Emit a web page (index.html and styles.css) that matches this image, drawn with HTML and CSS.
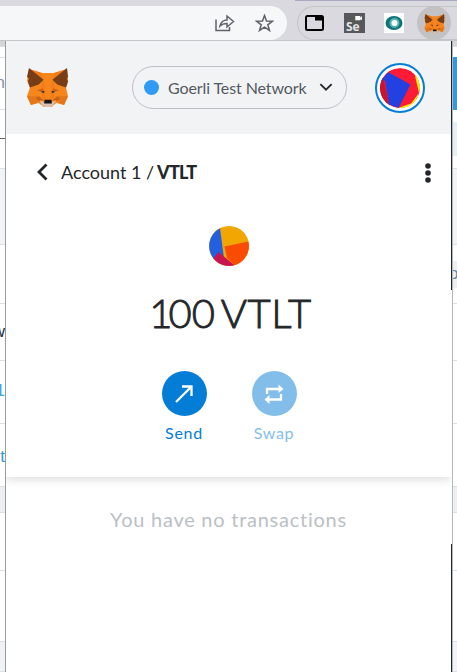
FILE: index.html
```html
<!DOCTYPE html>
<html lang="en">
<head>
<meta charset="utf-8">
<title>MetaMask</title>
<link rel="stylesheet" href="styles.css">
</head>
<body>
<svg class="defs" aria-hidden="true">
  <symbol id="fox" viewBox="0 0 42 40">
    <path fill="#f6851b" d="M2 1 17 5.5H26L41 1 42 13 40 20 42 29 38 38 30 36 25 40H17L12 36 4 38 0 29 3 20 0 13Z"/>
    <path fill="#ee7d1b" d="M2 1 17 12 15 5.5ZM41 1 26 12 28 5.5ZM16 13 14 22 17 33 20 31V14ZM27 13 29 22 26 33 23 31V14Z"/>
    <path fill="#f6851b" d="M17 5H26L24 31H19Z"/>
    <path fill="#763d16" d="M2 0 17 12 12 17 3 20 1 14 2 11 0 9ZM41 0 26 12 31 17 40 20 42 14 41 11 42 9Z"/>
    <path fill="#e4761b" d="M0 29H12L10 36 4 38ZM42 29H31L33 36 38 38Z"/>
    <path fill="#cd6116" d="M12 29 17 33 12 34 9 31ZM31 29 26 33 31 34 34 31ZM10 23 16 21 18 25ZM33 23 27 21 25 25Z"/>
    <path fill="#d7c1b3" d="M13 33 18 35H25L30 33 27 38 24 40H18L15 38Z"/>
    <path fill="#233447" d="M14 24 18 23.500 17 26ZM29 24 25 23.500 26 26Z"/>
    <path fill="#161616" d="M18 32.500H25L25.500 36.500H17.500Z"/>
  </symbol>
</svg>
<div class="toolbar">
  <div class="address">
    <svg class="share" viewBox="0 0 20 18"><path d="M1 5.500V16.500H14.500V13M5 12C6 8 8.500 6 12 6V2L18.500 7.500 12 13V9.500C9 9.500 7 10 5 12Z"/></svg>
    <svg class="star" viewBox="0 0 18 18"><path d="M9 1.500 11 7 17 7.200 12.300 10.800 14 16.500 9 13.200 4 16.500 5.700 10.800 1 7.200 7 7Z"/></svg>
  </div>
  <div class="extensions">
    <svg class="ext-tab" viewBox="0 0 19 16"><rect x="1" y="1" width="17" height="14" rx="1.500"/><path d="M10 1H18V5.500H10Z"/></svg>
    <div class="ext-se"><svg viewBox="0 0 9 6"><path d="M0 0H6V2L8 0V5L6 4V5H0Z"/></svg>Se</div>
    <svg class="ext-eye" viewBox="0 0 20 20"><path fill="#fff" d="M0 0H20V20H0Z"/><ellipse cx="10" cy="10" rx="8.500" ry="7" fill="#0e7478"/><ellipse cx="10.500" cy="10" rx="5" ry="5" fill="#55b5af"/><circle cx="10.500" cy="10" r="3" fill="#fff"/></svg>
    <div class="ext-fox"><svg><use href="#fox"/></svg></div>
  </div>
</div>
<div class="stage">
  <div class="strip left">
    <i class="s1"></i><i class="s2"></i><i class="s3"><b>n</b></i><i class="s4"></i><i class="s5"></i><i class="s6"></i><i class="s7"></i><i class="s8"><b>w</b></i><i class="s9"><b>1</b></i><i class="s10"><b>t</b></i><i class="s11"></i><i class="s12"></i><i class="s13"></i><i class="s14"></i>
  </div>
  <main class="popup">
    <header>
      <svg class="logo"><use href="#fox"/></svg>
      <div class="network"><span class="dot"></span><span class="network-name">Goerli Test Network</span><svg viewBox="0 0 12 8"><path d="M1 1 6 6 11 1"/></svg></div>
      <div class="account"><svg viewBox="0 0 40 40"><circle cx="20" cy="20" r="20" fill="#ff1b35"/><path fill="#ffed00" d="M34.500 5.500A20 20 0 0 1 40 20L38.500 27 34.500 35A20 20 0 0 1 18 40L31 35.500 39 25Z"/><path fill="#c8142e" d="M3 9 10 40A20 20 0 0 1 3 9Z"/><path fill="#2340e1" d="M8 4 30.500 16.500 18.500 40 9 36.500 5 13 2 12Z"/></svg></div>
    </header>
    <section class="asset">
      <nav><svg class="back" viewBox="0 0 11 18"><path d="M9.500 1.500 2 9 9.500 16.500"/></svg><span class="crumb">Account 1 /</span><strong>VTLT</strong><svg class="menu" viewBox="0 0 6 20"><circle cx="3" cy="3" r="2.800"/><circle cx="3" cy="10" r="2.800"/><circle cx="3" cy="17" r="2.800"/></svg></nav>
      <svg class="token" viewBox="0 0 40 40"><circle cx="20" cy="20" r="20" fill="#f2a602"/><path fill="#2360df" d="M11 2.200 15 32 5 33A20 20 0 0 1 11 2.200Z"/><path fill="#fa4b02" d="M15.500 20.500 39.400 15.500A20 20 0 0 1 25.500 39.200L18 32Z"/><path fill="#c81552" d="M9.500 26 25.500 39.200A20 20 0 0 1 4.500 32.500Z"/></svg>
      <div class="balance"><span class="lead">1</span>00 <span class="unit">VTLT</span></div>
      <div class="actions">
        <div class="action"><span class="disc"><svg viewBox="0 0 18 18"><path d="M1 17 16 2M7 1.500H16.500V11"/></svg></span><span>Send</span></div>
        <div class="action swap"><span class="disc"><svg viewBox="0 0 20 20"><path d="M3 10V5H15M17 10V15.500H5"/><path class="solid" d="M14.500 0.500 19.500 5 14.500 9ZM5.500 11 .5 15.500 5.500 20Z"/></svg></span><span>Swap</span></div>
      </div>
    </section>
    <section class="history"><span>You have no transactions</span></section>
  </main>
  <div class="edge"><i></i><i></i><i></i></div>
  <div class="strip right">
    <i class="s1"></i><i class="r2"></i><i class="r3"></i><i class="r4"></i><i class="r5"></i><i class="r6"></i><i class="s6"></i><i class="r8"></i><i class="r9"><b>o</b></i><i class="r10"></i><i class="s8"></i><i class="s9"></i><i class="s10"></i><i class="s11"></i><i class="s12"></i><i class="s13"></i><i class="r14"></i>
  </div>
</div>
</body>
</html>
```

FILE: styles.css
```css
* { box-sizing: border-box; }
body { margin: 0; width: 457px; height: 672px; overflow: hidden; background: #fff; font-family: Lato, "Liberation Sans", sans-serif; color: #24272a; }
svg { display: block; flex: none; }
.defs { display: none; }
.toolbar { height: 41px; display: flex; gap: 10px; padding-top: 6px; background: linear-gradient(#a9a9bf, #a9a9bf) 295px 0 / 162px 1px no-repeat, #d9d9df; border-bottom: 1px solid #c5c6ca; }
.address { width: 287px; height: 34px; background: #f5f7f9; border-radius: 0 17px 17px 0; display: flex; align-items: center; padding-left: 215px; gap: 20px; }
.address svg { fill: none; stroke: #5f6368; stroke-width: 1.5; }
.share { width: 20px; height: 18px; }
.star { width: 19px; height: 18px; }
.extensions { width: 160px; height: 34px; border: 1px solid #c4c5c9; border-right: 0; border-radius: 17px 0 0 17px; display: flex; align-items: center; padding-left: 7px; }
.ext-tab { width: 19px; height: 16px; margin-right: 20px; fill: none; stroke: #000; stroke-width: 2; }
.ext-tab path { fill: #000; stroke: none; }
.ext-se { width: 21px; height: 20px; background: #57585b; color: #e4e4e6; font: bold 12px/12px "Open Sans", sans-serif; padding: 3px 0 0 2px; margin-right: 19px; }
.ext-se svg { width: 8px; height: 5px; margin-left: 9px; fill: #fff; }
.ext-eye { width: 20px; height: 20px; margin-right: 13px; }
.ext-fox { width: 34px; height: 34px; flex: none; border-radius: 50%; background: #c2c2c5; display: grid; place-items: center; }
.ext-fox svg { width: 21px; height: 19px; }
.stage { height: 631px; display: grid; grid-template-columns: 6px 445px 1px 5px; }
.strip { display: flex; flex-direction: column; overflow: hidden; }
.left { border-right: 1px solid #999a9c; }
.right { border-left: 1px solid #b5b6b8; }
.strip i { display: block; flex: none; border-bottom: 1px solid #dcdfe8; overflow: hidden; font-style: normal; }
.strip b { display: block; font: 17px/20px "Liberation Sans", sans-serif; }
.left b { width: 5px; direction: rtl; }
.s1 { height: 6px; background: #d4d6dc; }
.s2 { height: 11px; }
.s3 { height: 52px; color: #8791a3; padding-top: 15px; }
.strip .s4 { height: 29px; border-color: #60646b; }
.s5 { height: 30px; }
.s6 { height: 76px; background: #f1f3f6; }
.s7 { height: 59px; }
.s8 { height: 57px; padding-top: 18px; color: #252a3a; }
.s9 { height: 63px; padding-top: 20px; color: #3ba6e0; }
.s10 { height: 63px; padding-top: 23px; color: #3498db; }
.s11 { height: 26px; background: #edeff3; }
.s12 { height: 58px; }
.s13 { height: 71px; }
.s14 { height: 30px; background: #f0f2f5; }
.strip .r2, .strip .r3, .strip .r4, .strip .r5, .strip .r8, .strip .r9 { border: 0; }
.r2 { height: 10px; }
.r3 { height: 53px; background: #3498db; }
.r4 { height: 12px; }
.r5 { height: 34px; background: #e4eff7; }
.r6 { height: 13px; }
.r8 { height: 16px; }
.r9 { height: 27px; background: #eeeff1; color: #5c85a9; padding-top: 3px; }
.right b { margin-left: -4px; }
.r10 { height: 16px; }
.r14 { height: 30px; background: #f2f3fa; }
.edge { display: flex; flex-direction: column; }
.edge i { height: 249px; background: #24272a; }
.edge i:nth-child(2) { height: 254px; background: #fff; }
.edge i:nth-child(3) { height: 128px; }
.popup { display: flex; flex-direction: column; background: #fff; overflow: hidden; }
header { height: 93px; flex: none; background: #f2f3f5; display: flex; align-items: center; padding-left: 21px; }
.logo { width: 41px; height: 39px; }
.network { width: 215px; height: 43px; margin-left: 64px; border: 1px solid #bbc0c5; border-radius: 22px; display: flex; align-items: center; padding-left: 11px; }
.dot { width: 15px; height: 15px; border-radius: 50%; background: #2f9bf4; margin-right: 9px; flex: none; }
.network-name { width: 151px; font-size: 16px; line-height: 20px; letter-spacing: -.1px; color: #535a61; white-space: nowrap; }
.network svg { width: 14px; height: 9px; fill: none; stroke: #24272a; stroke-width: 1.6; }
.account { width: 50px; height: 50px; margin-left: 28px; border: 2px solid #037dd6; border-radius: 50%; background: #fff; display: grid; place-items: center; }
.account svg { width: 40px; height: 40px; border-radius: 50%; }
.asset { position: relative; height: 343px; flex: none; display: flex; flex-direction: column; align-items: center; background: #fff; clip-path: inset(0 0 -20px); box-shadow: 0 2px 9px rgba(0,0,0,.15); }
nav { width: 100%; height: 20px; margin-top: 28px; padding-left: 31px; display: flex; align-items: center; font-size: 18px; line-height: 20px; white-space: nowrap; }
.back { width: 11px; height: 18px; fill: none; stroke: #24272a; stroke-width: 2.8; }
.crumb { width: 96px; margin-left: 13px; }
nav strong { width: 40px; font-weight: 900; letter-spacing: -.7px; }
.menu { width: 6px; height: 20px; margin: 2px 0 0 228px; fill: #24272a; }
.token { width: 40px; height: 40px; margin-top: 44px; }
.balance { margin: 23px 0 1px 4px; font-size: 40px; font-weight: 300; line-height: 48px; word-spacing: -5px; white-space: nowrap; -webkit-text-stroke: .9px #24272a; }
.lead { letter-spacing: -4px; }
.unit { letter-spacing: .5px; }
.actions { display: flex; gap: 45px; margin: 33px 0 0 1px; }
.action { width: 45px; display: flex; flex-direction: column; align-items: center; gap: 7px; color: #037dd6; font-size: 16px; line-height: 20px; letter-spacing: .7px; }
.disc { width: 45px; height: 45px; border-radius: 50%; background: #037dd6; display: grid; place-items: center; }
.disc svg { width: 18px; height: 18px; fill: none; stroke: #fff; stroke-width: 2.3; }
.swap { color: #83beeb; }
.swap .disc { background: #83beeb; }
.swap svg { width: 20px; height: 20px; }
.disc .solid { fill: #fff; stroke: none; }
.history { flex: 1; display: flex; justify-content: center; padding-top: 30px; font-size: 20px; line-height: 24px; letter-spacing: .75px; color: #bbc0c5; }
```
